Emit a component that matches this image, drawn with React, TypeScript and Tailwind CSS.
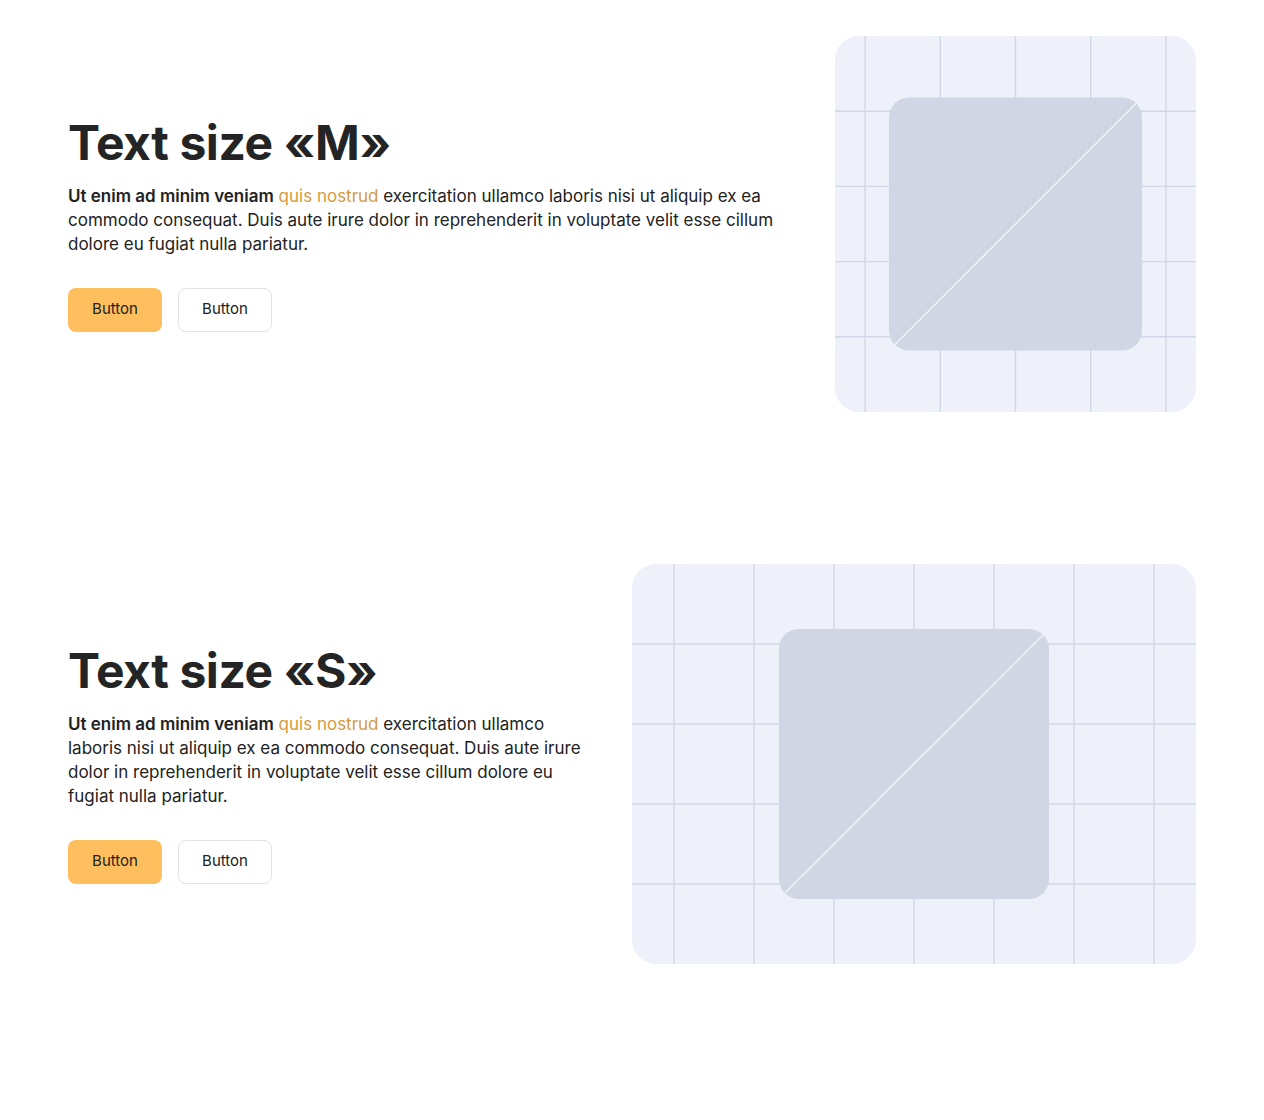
import React from "react";

function Placeholder({ w, h, inner }: { w: number; h: number; inner: number }) {
  const s = h / 5;
  const cx = w / 2;
  const cy = h / 2;
  const vs: number[] = [];
  for (let k = -10; k <= 10; k++) {
    const x = cx + k * s;
    if (x > 0 && x < w) vs.push(x);
  }
  const hs: number[] = [];
  for (let k = 1; k < 5; k++) hs.push(k * s);
  const ix = cx - inner / 2;
  const iy = cy - inner / 2;
  const r = 20;
  const d = r * (1 - Math.SQRT1_2);
  return (
    <svg width={w} height={h} viewBox={`0 0 ${w} ${h}`} className="block">
      {vs.map((x, i) => (
        <line key={"v" + i} x1={x} y1={0} x2={x} y2={h} stroke="#d1d7e5" strokeWidth={1.4} />
      ))}
      {hs.map((y, i) => (
        <line key={"h" + i} x1={0} y1={y} x2={w} y2={y} stroke="#d1d7e5" strokeWidth={1.4} />
      ))}
      <rect x={ix} y={iy} width={inner} height={inner} rx={r} fill="#d0d6e3" />
      <line
        x1={ix + d}
        y1={iy + inner - d}
        x2={ix + inner - d}
        y2={iy + d}
        stroke="#ffffff"
        strokeWidth={1.2}
        opacity={0.9}
      />
    </svg>
  );
}

function TextBlock({ size }: { size: string }) {
  return (
    <div className="flex flex-col">
      <h2 className="text-[48px] leading-[52px] font-bold tracking-[-0.4px] text-[#242424]">
        Text size «{size}»
      </h2>
      <p className="mt-[15px] text-[17px] leading-6 text-[#222222]">
        <span className="font-semibold">Ut enim ad minim veniam</span>{" "}
        <span className="text-[#d69a42]">quis nostrud</span> exercitation ullamco laboris nisi ut aliquip ex ea
        commodo consequat. Duis aute irure dolor in reprehenderit in voluptate velit esse cillum dolore eu fugiat
        nulla pariatur.
      </p>
      <div className="mt-[32px] flex gap-4">
        <button className="h-11 w-[94px] rounded-lg bg-[#ffbf5e] text-[15px] text-[#222222]">Button</button>
        <button className="h-11 w-[94px] rounded-lg border border-[#e3e3e3] bg-white text-[15px] text-[#222222]">
          Button
        </button>
      </div>
    </div>
  );
}

export default function App() {
  return (
    <div
      className="min-h-[1120px] bg-white px-[68px] pt-9"
      style={{ fontFamily: "Inter, 'Noto Sans', sans-serif" }}
    >
      <section className="flex items-center gap-12">
        <div className="flex-1">
          <TextBlock size="M" />
        </div>
        <div className="shrink-0 overflow-hidden rounded-3xl bg-[#eef1f9]">
          <Placeholder w={361} h={376} inner={253} />
        </div>
      </section>
      <section className="mt-[152px] flex items-center gap-12">
        <div className="flex-1">
          <TextBlock size="S" />
        </div>
        <div className="shrink-0 overflow-hidden rounded-3xl bg-[#eef1f9]">
          <Placeholder w={564} h={400} inner={270} />
        </div>
      </section>
    </div>
  );
}
